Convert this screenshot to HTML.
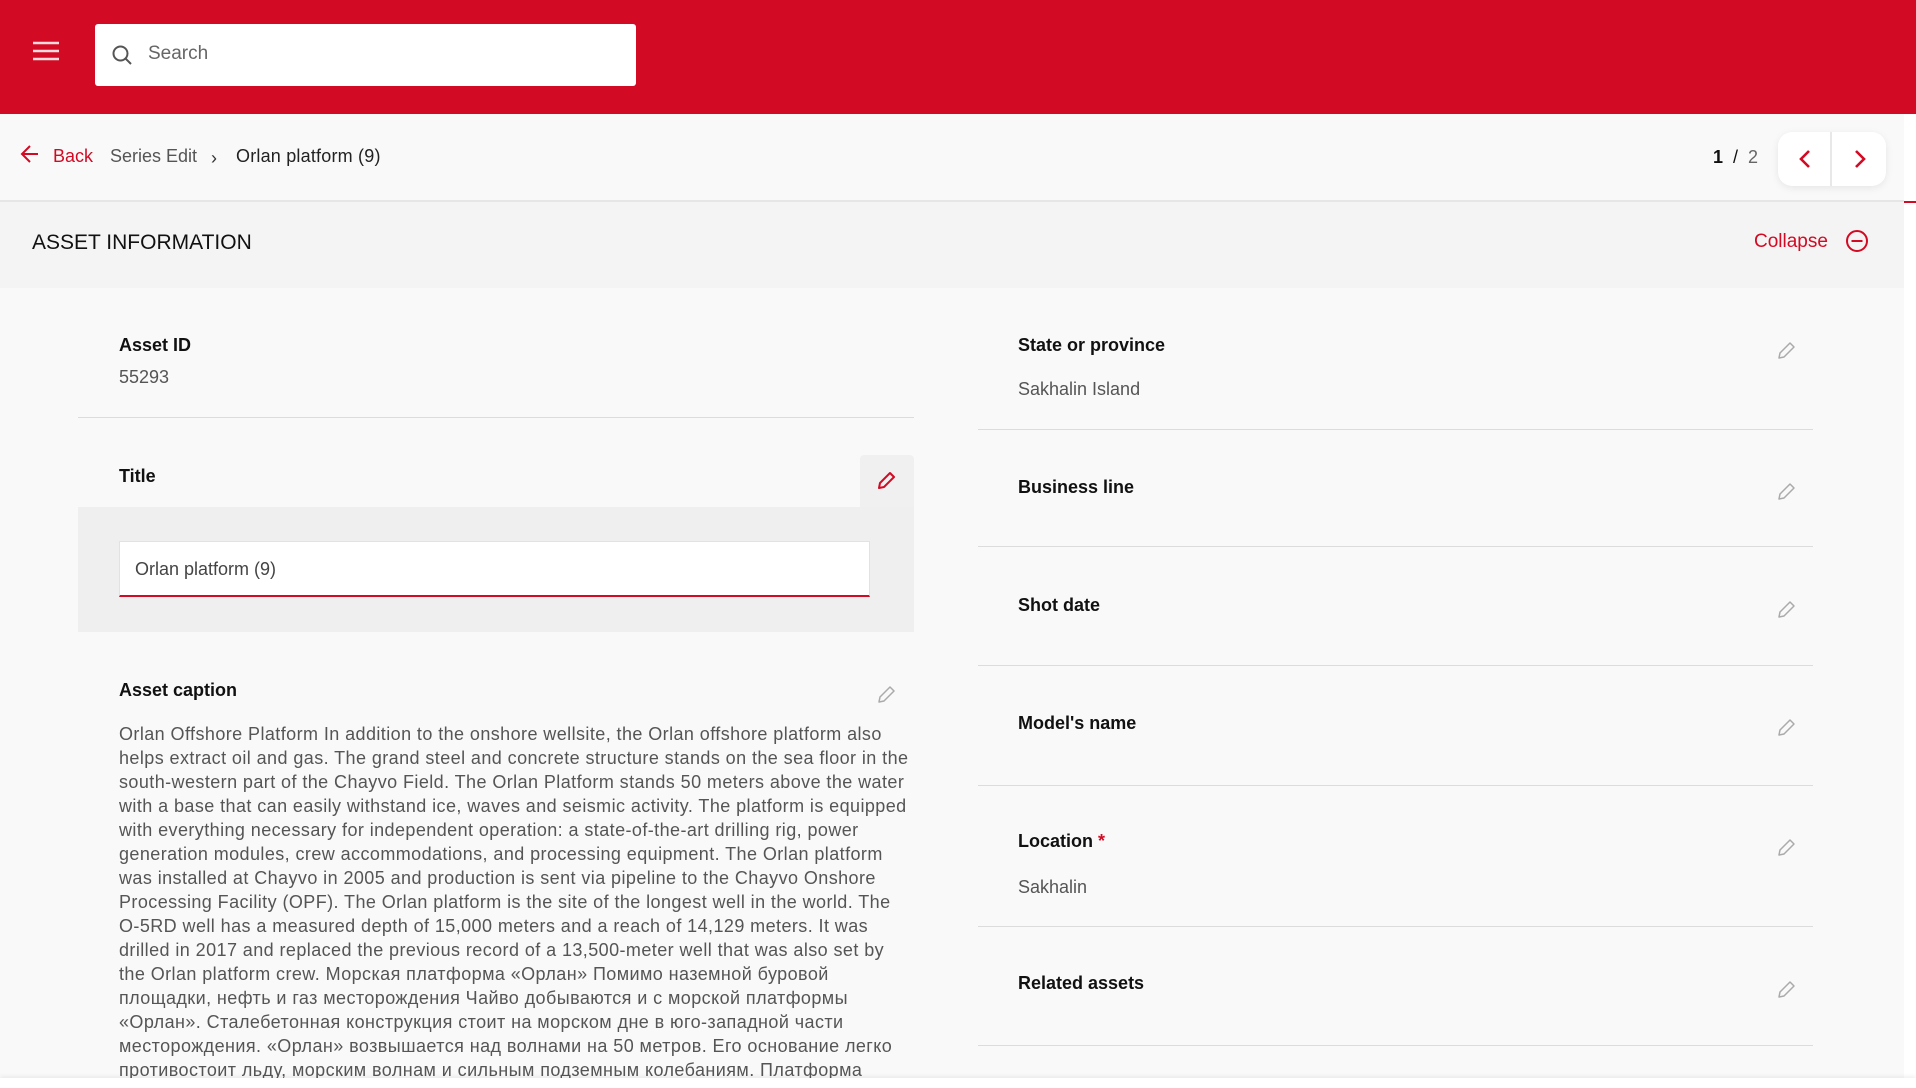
<!DOCTYPE html>
<html><head><meta charset="utf-8"><style>
*{box-sizing:border-box;margin:0;padding:0}
body{width:1916px;height:1088px;overflow:hidden;background:#fff;font-family:"Liberation Sans",sans-serif;color:#222;position:relative}
.abs{position:absolute}
.hdr{left:0;top:0;width:1916px;height:114px;background:#d30a24}
.search{left:95px;top:24px;width:541px;height:62px;background:#fff;border-radius:3px}
.crumb{left:0;top:114px;width:1904px;height:88px;background:#f9f9f9;border-bottom:2px solid #e6e6e6}
.sec{left:0;top:202px;width:1904px;height:86px;background:#f4f4f4}
.body{left:0;top:288px;width:1904px;height:790px;background:#f9f9f9}
.lbl{font-weight:bold;font-size:18px;color:#111}
.val{font-size:18px;color:#555}
.div{height:1px;background:#dcdcdc}
.pen{width:22px;height:22px}
.cap{font-size:18px;line-height:24px;color:#555;white-space:nowrap;letter-spacing:0.42px}
</style></head><body>
<div class="abs hdr"></div>
<svg class="abs" style="left:33px;top:41px" width="26" height="20"><g stroke="#fff" stroke-width="2.4" opacity=".85"><line x1="0" y1="2" x2="26" y2="2"/><line x1="0" y1="10" x2="26" y2="10"/><line x1="0" y1="18" x2="26" y2="18"/></g></svg>
<div class="abs search"></div>
<svg class="abs" style="left:111px;top:44px" width="22" height="22"><circle cx="9.5" cy="9.5" r="7" fill="none" stroke="#555" stroke-width="2"/><line x1="14.5" y1="14.5" x2="20" y2="20" stroke="#555" stroke-width="2"/></svg>
<div class="abs" style="left:148px;top:43px;font-size:19px;color:#666">Search</div>

<div class="abs crumb"></div>
<svg class="abs" style="left:20px;top:144px" width="20" height="20"><path d="M18 10H3M10 2L2 10l8 8" fill="none" stroke="#d30a24" stroke-width="2"/></svg>
<div class="abs" style="left:53px;top:146px;font-size:18px;color:#d30a24">Back</div>
<div class="abs" style="left:110px;top:146px;font-size:18px;color:#555">Series Edit</div>
<div class="abs" style="left:211px;top:148px;font-size:18px;color:#333">›</div>
<div class="abs" style="left:236px;top:146px;font-size:18px;color:#222;letter-spacing:0.2px">Orlan platform (9)</div>
<div class="abs" style="left:1713px;top:147px;font-size:18px;color:#111"><b>1</b>&nbsp;&nbsp;/&nbsp;&nbsp;<span style="color:#666">2</span></div>
<div class="abs" style="left:1778px;top:132px;width:108px;height:54px;background:#fff;border-radius:14px;box-shadow:0 2px 8px rgba(0,0,0,.08)"></div>
<div class="abs" style="left:1830px;top:132px;width:2px;height:54px;background:#e8e8e8"></div>
<svg class="abs" style="left:1796px;top:148px" width="20" height="22"><path d="M13 3L5 11l8 8" fill="none" stroke="#d30a24" stroke-width="2.6"/></svg>
<svg class="abs" style="left:1850px;top:148px" width="20" height="22"><path d="M6 3l8 8-8 8" fill="none" stroke="#d30a24" stroke-width="2.6"/></svg>
<div class="abs" style="left:1904px;top:201px;width:12px;height:2px;background:#d30a24"></div>

<div class="abs sec"></div>
<div class="abs" style="left:32px;top:231px;font-size:21px;color:#111">ASSET INFORMATION</div>
<div class="abs" style="left:1754px;top:231px;font-size:19px;color:#d30a24">Collapse</div>
<svg class="abs" style="left:1845px;top:229px" width="24" height="24"><circle cx="12" cy="12" r="10" fill="none" stroke="#d30a24" stroke-width="2"/><line x1="6.5" y1="12" x2="17.5" y2="12" stroke="#d30a24" stroke-width="2"/></svg>

<div class="abs body"></div>

<!-- left column -->
<div class="abs lbl" style="left:119px;top:335px">Asset ID</div>
<div class="abs val" style="left:119px;top:367px">55293</div>
<div class="abs div" style="left:78px;top:417px;width:836px"></div>
<div class="abs lbl" style="left:119px;top:466px">Title</div>
<div class="abs" style="left:860px;top:455px;width:54px;height:53px;background:#f0f0f0;border-radius:4px 4px 0 0"></div>
<div class="abs" style="left:78px;top:507px;width:836px;height:125px;background:#efefef"></div>
<svg class="abs" style="left:876px;top:469px" width="22" height="22"><path d="M3 19l1-5L14 4l4 4L8 18z" fill="none" stroke="#d30a24" stroke-width="2" stroke-linejoin="round"/></svg>
<div class="abs" style="left:119px;top:541px;width:751px;height:56px;background:#fff;border:1px solid #e2e2e2;border-bottom:2px solid #d30a24"></div>
<div class="abs val" style="left:135px;top:559px;color:#444">Orlan platform (9)</div>
<div class="abs lbl" style="left:119px;top:680px">Asset caption</div>
<svg class="abs pen" style="left:876px;top:683px"><path d="M3 19l1-5L14 4l4 4L8 18z" fill="none" stroke="#aaa" stroke-width="1.5" stroke-linejoin="round"/></svg>
<div class="abs cap" style="left:119px;top:722px">Orlan Offshore Platform In addition to the onshore wellsite, the Orlan offshore platform also<br>helps extract oil and gas. The grand steel and concrete structure stands on the sea floor in the<br>south-western part of the Chayvo Field. The Orlan Platform stands 50 meters above the water<br>with a base that can easily withstand ice, waves and seismic activity. The platform is equipped<br>with everything necessary for independent operation: a state-of-the-art drilling rig, power<br>generation modules, crew accommodations, and processing equipment. The Orlan platform<br>was installed at Chayvo in 2005 and production is sent via pipeline to the Chayvo Onshore<br>Processing Facility (OPF). The Orlan platform is the site of the longest well in the world. The<br>O-5RD well has a measured depth of 15,000 meters and a reach of 14,129 meters. It was<br>drilled in 2017 and replaced the previous record of a 13,500-meter well that was also set by<br>the Orlan platform crew. Морская платформа «Орлан» Помимо наземной буровой<br>площадки, нефть и газ месторождения Чайво добываются и с морской платформы<br>«Орлан». Сталебетонная конструкция стоит на морском дне в юго-западной части<br>месторождения. «Орлан» возвышается над волнами на 50 метров. Его основание легко<br>противостоит льду, морским волнам и сильным подземным колебаниям. Платформа</div>

<!-- right column -->
<div class="abs lbl" style="left:1018px;top:335px">State or province</div>
<div class="abs val" style="left:1018px;top:379px">Sakhalin Island</div>
<div class="abs div" style="left:978px;top:429px;width:835px"></div>
<div class="abs lbl" style="left:1018px;top:477px">Business line</div>
<div class="abs div" style="left:978px;top:546px;width:835px"></div>
<div class="abs lbl" style="left:1018px;top:595px">Shot date</div>
<div class="abs div" style="left:978px;top:665px;width:835px"></div>
<div class="abs lbl" style="left:1018px;top:713px">Model's name</div>
<div class="abs div" style="left:978px;top:785px;width:835px"></div>
<div class="abs lbl" style="left:1018px;top:831px">Location <span style="color:#d30a24">*</span></div>
<div class="abs val" style="left:1018px;top:877px">Sakhalin</div>
<div class="abs div" style="left:978px;top:926px;width:835px"></div>
<div class="abs lbl" style="left:1018px;top:973px">Related assets</div>
<div class="abs div" style="left:978px;top:1045px;width:835px"></div>

<svg class="abs pen" style="left:1776px;top:339px"><path d="M3 19l1-5L14 4l4 4L8 18z" fill="none" stroke="#aaa" stroke-width="1.5" stroke-linejoin="round"/></svg>
<svg class="abs pen" style="left:1776px;top:480px"><path d="M3 19l1-5L14 4l4 4L8 18z" fill="none" stroke="#aaa" stroke-width="1.5" stroke-linejoin="round"/></svg>
<svg class="abs pen" style="left:1776px;top:598px"><path d="M3 19l1-5L14 4l4 4L8 18z" fill="none" stroke="#aaa" stroke-width="1.5" stroke-linejoin="round"/></svg>
<svg class="abs pen" style="left:1776px;top:716px"><path d="M3 19l1-5L14 4l4 4L8 18z" fill="none" stroke="#aaa" stroke-width="1.5" stroke-linejoin="round"/></svg>
<svg class="abs pen" style="left:1776px;top:836px"><path d="M3 19l1-5L14 4l4 4L8 18z" fill="none" stroke="#aaa" stroke-width="1.5" stroke-linejoin="round"/></svg>
<svg class="abs pen" style="left:1776px;top:978px"><path d="M3 19l1-5L14 4l4 4L8 18z" fill="none" stroke="#aaa" stroke-width="1.5" stroke-linejoin="round"/></svg>

<div class="abs" style="left:0;top:1078px;width:1916px;height:10px;background:#fff;box-shadow:0 -2px 4px rgba(0,0,0,.06)"></div>
</body></html>
